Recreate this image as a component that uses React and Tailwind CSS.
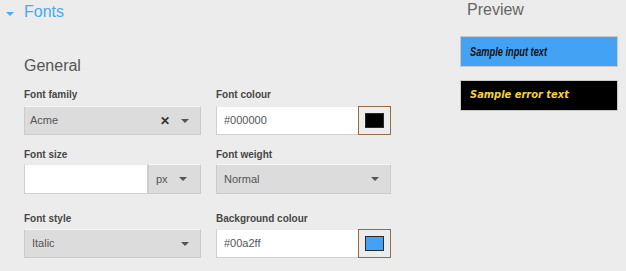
import React from 'react';

const SANS = { fontFamily: '"Liberation Sans", Arial, sans-serif' };

const Arrow = ({ className = '' }) => (
  <svg width="8" height="4" viewBox="0 0 8 4" className={className}>
    <polygon points="0,0 8,0 4,4" fill="#555" />
  </svg>
);

const Label = ({ children, className = '' }) => (
  <div className={`h-[12px] text-[10px] leading-[12px] font-bold text-[#474747] ${className}`}>{children}</div>
);

const Select = ({ value, clearable, height = 'h-[29px]', arrowMr = 'mr-[11px]', padding = 'pl-[7px]', className = '' }) => (
  <div className={`flex items-center ${height} ${padding} bg-[#dcdcdc] border border-[#cbcbcb] border-t-[#f7f7f7] ${className}`}>
    <span className="flex-1 text-[11px] text-[#555]">{value}</span>
    {clearable && <span className="mr-[11px] text-[12px] font-bold leading-none text-[#333]">✕</span>}
    <Arrow className={arrowMr} />
  </div>
);

const ColourInput = ({ value, swatch }) => (
  <div className="flex h-[29px]">
    <div className="flex flex-1 items-center pl-[7px] bg-white border border-[#d0d0d0] border-t-[#e9e9e9] border-r-0 text-[11px] text-[#555]">
      {value}
    </div>
    <div className="flex w-[33px] items-center justify-center border border-[#8f6d4c]">
      <div className={`h-[15px] w-[19px] border border-[#2a2a2a] ${swatch}`} />
    </div>
  </div>
);

export default function App() {
  return (
    <div className="flex h-[271px] w-[626px] overflow-hidden bg-[#ececec]" style={SANS}>
      {/* left: settings */}
      <div className="w-[460px]">
        <div className="mt-[2px] flex h-[20px] items-center pl-[6px]">
          <svg width="8" height="4" viewBox="0 0 8 4" className="mt-[3px]">
            <polygon points="0,0 8,0 4,4" fill="#4aa8f0" />
          </svg>
          <span className="ml-[10px] text-[16px] leading-[20px] text-[#4aa8f0]">Fonts</span>
        </div>

        <div className="mt-[34px] pl-[24px] text-[16px] leading-[20px] text-[#555]">General</div>

        <div className="mt-[13px] grid grid-cols-[177px_175px] gap-x-[15px] pl-[24px]">
          <div>
            <Label>Font family</Label>
            <Select value="Acme" clearable padding="pl-[5px]" className="mt-[5px]" />
          </div>
          <div>
            <Label>Font colour</Label>
            <div className="mt-[5px]">
              <ColourInput value="#000000" swatch="bg-black" />
            </div>
          </div>

          <div className="mt-[14px]">
            <Label>Font size</Label>
            <div className="mt-[3px] flex h-[30px]">
              <div className="w-[124px] bg-white border border-[#d0d0d0] border-t-[#e9e9e9]" />
              <Select value="px" height="h-[30px]" arrowMr="mr-[13px]" padding="pl-[7px]" className="flex-1" />
            </div>
          </div>
          <div className="mt-[14px]">
            <Label>Font weight</Label>
            <Select value="Normal" height="h-[30px]" className="mt-[3px]" />
          </div>

          <div className="mt-[19px]">
            <Label>Font style</Label>
            <Select value="Italic" className="mt-[4px]" />
          </div>
          <div className="mt-[19px]">
            <Label>Background colour</Label>
            <div className="mt-[4px]">
              <ColourInput value="#00a2ff" swatch="bg-[#44a2f5]" />
            </div>
          </div>
        </div>
      </div>

      {/* right: preview */}
      <div className="w-[158px]">
        <div className="pl-[7px] text-[16px] leading-[20px] text-[#666]">Preview</div>
        <div className="mt-[16px] flex h-[31px] items-center pl-[9px] bg-[#44a2f5] border border-[#c9c9c9]">
          <span className="inline-block origin-left scale-x-[0.77] whitespace-nowrap text-[12px] font-bold italic text-[#111]">
            Sample input text
          </span>
        </div>
        <div
          className="mt-[13px] flex h-[31px] items-center pl-[9px] bg-black border border-[#c9c9c9] text-[11px] font-bold italic text-[#f4d13e]"
          style={{ fontFamily: '"DejaVu Sans Condensed", "DejaVu Sans", sans-serif' }}
        >
          Sample error text
        </div>
      </div>
    </div>
  );
}
